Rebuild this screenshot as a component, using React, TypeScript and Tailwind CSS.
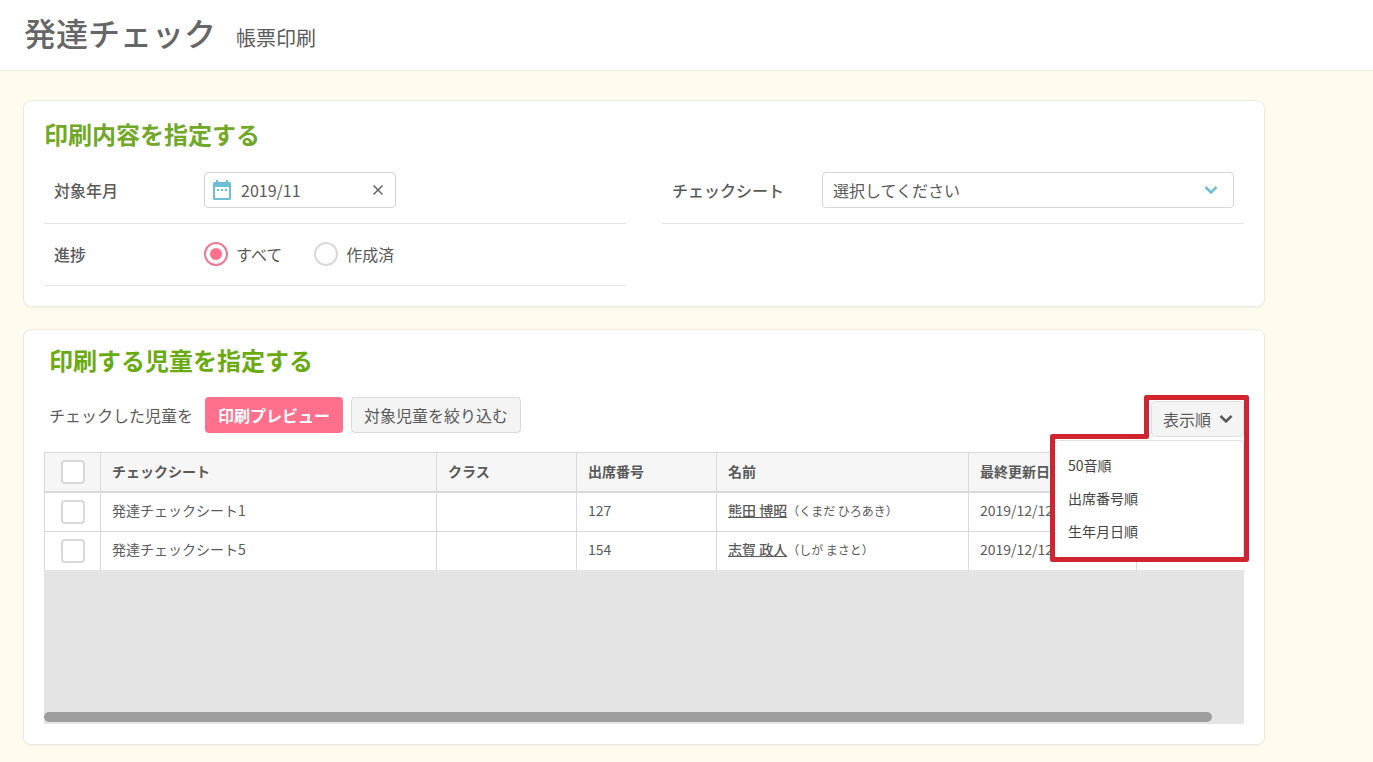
import React, { useState } from 'react';

interface Child {
  id: number;
  sheet: string;
  className: string;
  attendanceNo: string;
  name: string;
  kana: string;
  updatedAt: string;
}

const children: Child[] = [
  { id: 1, sheet: '発達チェックシート1', className: '', attendanceNo: '127', name: '熊田 博昭', kana: '（くまだ ひろあき）', updatedAt: '2019/12/12' },
  { id: 2, sheet: '発達チェックシート5', className: '', attendanceNo: '154', name: '志賀 政人', kana: '（しが まさと）', updatedAt: '2019/12/12' }
];

const sortOptions = ['50音順', '出席番号順', '生年月日順'];

const CalendarIcon: React.FC = () => (
  <svg className="w-[18px] h-5 shrink-0" viewBox="0 0 18 20" fill="#6cbfd6" aria-hidden="true">
    <path fillRule="evenodd" d="M3 0h2v2h8V0h2v2h1.500A1.500 1.500 0 0 1 18 3.500v15a1.500 1.500 0 0 1-1.500 1.500h-15A1.500 1.500 0 0 1 0 18.500v-15A1.500 1.500 0 0 1 1.500 2H3zM2 7v11h14V7z" />
    <path d="M4 9h2v2H4zM8 9h2v2H8zM12 9h2v2h-2z" />
  </svg>
);

const Chevron: React.FC<{ className: string }> = ({ className }) => (
  <svg className={className} viewBox="0 0 14 10" fill="none" stroke="currentColor" strokeWidth={2.5} aria-hidden="true">
    <path d="M1.500 2 7 7.500 12.500 2" />
  </svg>
);

interface CheckBoxProps {
  label: string;
  checked: boolean;
  onChange: () => void;
}

const CheckBox: React.FC<CheckBoxProps> = ({ label, checked, onChange }) => (
  <input
    type="checkbox"
    aria-label={label}
    checked={checked}
    onChange={onChange}
    className="block mx-auto w-6 h-6 appearance-none rounded border-2 border-[#d9d9d9] bg-white checked:bg-[#ff708c]"
  />
);

const App: React.FC = () => {
  const [month, setMonth] = useState('2019/11');
  const [progress, setProgress] = useState('all');
  const [checked, setChecked] = useState<number[]>([]);
  const [menuOpen, setMenuOpen] = useState(true);

  const toggle = (id: number) => {
    setChecked(prev => (prev.includes(id) ? prev.filter(v => v !== id) : [...prev, id]));
  };

  const allChecked = checked.length === children.length;

  const radioClass =
    'w-6 h-6 appearance-none rounded-full border-2 border-[#d9d9d9] bg-white bg-clip-content p-1 checked:border-[#e87a92] checked:bg-[#ff708c]';

  return (
    <div className="min-h-screen bg-[#fffbee] text-base text-[#5a5a5a] font-['Noto_Sans_CJK_JP',sans-serif]">
      <header className="flex items-baseline gap-5 h-[71px] px-6 pt-2 bg-white border-b border-[#ebebe6]">
        <h1 className="text-[32px] leading-12 font-medium text-[#666]">発達チェック</h1>
        <p className="text-xl">帳票印刷</p>
      </header>

      <main className="max-w-[1265px] pl-[23px] pt-[29px] pb-4">
        <section className="px-5 pt-[15px] pb-5 bg-white border border-[#ebebe3] rounded-lg shadow-xs">
          <h2 className="text-2xl leading-9 font-bold text-[#72a827]">印刷内容を指定する</h2>
          <div className="grid grid-cols-2 gap-x-9 mt-[5px]">
            <div className="flex items-center h-[67px] pl-2.5 border-b border-[#e6e6e6]">
              <label htmlFor="month" className="w-[150px] font-medium">対象年月</label>
              <div className="flex items-center w-48 h-9 px-2 bg-white border border-[#d5d5d5] rounded">
                <CalendarIcon />
                <input
                  id="month"
                  type="text"
                  value={month}
                  onChange={e => setMonth(e.target.value)}
                  className="flex-1 min-w-0 ml-2.5 outline-none"
                />
                <button type="button" aria-label="クリア" onClick={() => setMonth('')} className="p-1">
                  <svg className="w-[10px] h-[10px]" viewBox="0 0 10 10" stroke="currentColor" strokeWidth={1.4}>
                    <path d="M.5.5l9 9M9.500.5l-9 9" />
                  </svg>
                </button>
              </div>
            </div>

            <div className="flex items-center h-[67px] pl-2.5 pr-2.5 border-b border-[#e6e6e6]">
              <label htmlFor="sheet" className="w-[150px] font-medium">チェックシート</label>
              <div className="relative flex-1">
                <select
                  id="sheet"
                  className="block w-full h-9 px-2.5 appearance-none bg-white border border-[#d5d5d5] rounded"
                >
                  <option>選択してください</option>
                </select>
                <Chevron className="absolute right-4 top-[13px] w-3.5 h-2.5 text-[#6cbfd6] pointer-events-none" />
              </div>
            </div>

            <div className="flex items-center h-[62px] pl-2.5 pb-0.5 border-b border-[#e6e6e6]">
              <span id="progress" className="w-[150px] font-medium">進捗</span>
              <div role="radiogroup" aria-labelledby="progress" className="flex gap-8">
                <label className="flex items-center gap-2">
                  <input
                    type="radio"
                    name="progress"
                    checked={progress === 'all'}
                    onChange={() => setProgress('all')}
                    className={radioClass}
                  />
                  すべて
                </label>
                <label className="flex items-center gap-2">
                  <input
                    type="radio"
                    name="progress"
                    checked={progress === 'done'}
                    onChange={() => setProgress('done')}
                    className={radioClass}
                  />
                  作成済
                </label>
              </div>
            </div>
          </div>
        </section>

        <section className="mt-[22px] px-5 pt-3 pb-5 bg-white border border-[#ebebe3] rounded-lg shadow-xs">
          <h2 className="pl-[5px] text-2xl leading-9 font-bold text-[#6aab12]">印刷する児童を指定する</h2>

          <div className="flex items-center gap-2 h-9 mt-[19px] pl-[5px]">
            <span className="mr-1">チェックした児童を</span>
            <button type="button" className="h-9 px-[13px] rounded bg-[#ff708c] font-bold text-white">
              印刷プレビュー
            </button>
            <button type="button" className="h-9 px-3 rounded border border-[#d9d9d9] bg-[#f4f4f4]">
              対象児童を絞り込む
            </button>

            <div className="relative ml-auto mt-2">
              <button
                type="button"
                aria-expanded={menuOpen}
                onClick={() => setMenuOpen(!menuOpen)}
                className="flex items-center gap-2 h-9 pl-[11px] pr-2.5 rounded border border-[#e0e0e0] bg-[#f4f4f4]"
              >
                表示順
                <Chevron className="w-3.5 h-2.5" />
              </button>
              {menuOpen && (
                <>
                  <ul className="absolute right-0 top-[39px] w-[190px] pt-2 pb-3 bg-white border border-[#e0e0e0] rounded text-sm text-[#444]">
                    {sortOptions.map(option => (
                      <li key={option}>
                        <button type="button" className="block w-full h-[33px] px-[13px] pb-0.5 text-left">
                          {option}
                        </button>
                      </li>
                    ))}
                  </ul>
                  <svg
                    className="absolute -right-[5px] -top-[6px] w-[199px] h-[167px] pointer-events-none"
                    viewBox="0 0 199 167"
                    fill="none"
                    stroke="#d0252f"
                    strokeWidth={5}
                    strokeLinejoin="round"
                    aria-hidden="true"
                  >
                    <path d="M96.500 2.500h100v162H2.500v-123h94z" />
                  </svg>
                </>
              )}
            </div>
          </div>

          <div className="mt-[19px] h-[272px] flex flex-col overflow-hidden bg-[#e4e4e4]">
            <table className="w-full table-fixed border-separate border-spacing-0 bg-white text-sm text-left [&_th]:border-t [&_th]:border-b-2 [&_th]:border-l [&_td]:border-l [&_th]:border-[#dadada] [&_td]:border-[#dadada] [&_th]:px-[11px] [&_td]:px-[11px] [&_th:not(:first-child)]:pb-0.5 [&_td:not(:first-child)]:pb-1">
              <colgroup>
                <col className="w-14" />
                <col className="w-[336px]" />
                <col className="w-[140px]" />
                <col className="w-[140px]" />
                <col className="w-[252px]" />
                <col className="w-[168px]" />
                <col />
              </colgroup>
              <thead>
                <tr className="h-[41px] bg-[#f6f6f6]">
                  <th>
                    <CheckBox
                      label="すべて選択"
                      checked={allChecked}
                      onChange={() => setChecked(allChecked ? [] : children.map(c => c.id))}
                    />
                  </th>
                  <th>チェックシート</th>
                  <th>クラス</th>
                  <th>出席番号</th>
                  <th>名前</th>
                  <th>最終更新日</th>
                  <th></th>
                </tr>
              </thead>
              <tbody className="[&>tr:not(:last-child)>td]:border-b">
                {children.map(child => (
                  <tr key={child.id} className="h-[39px] last:h-[38px]">
                    <td>
                      <CheckBox label={child.name} checked={checked.includes(child.id)} onChange={() => toggle(child.id)} />
                    </td>
                    <td>{child.sheet}</td>
                    <td>{child.className}</td>
                    <td>{child.attendanceNo}</td>
                    <td className="whitespace-nowrap">
                      <a href="#" className="font-medium underline">{child.name}</a>
                      <span className="text-xs">{child.kana}</span>
                    </td>
                    <td>{child.updatedAt}</td>
                    <td></td>
                  </tr>
                ))}
              </tbody>
            </table>
            <div className="mt-auto mb-0.5 h-2.5 w-[97.333%] rounded-full bg-[#9e9e9e]" />
          </div>
        </section>
      </main>
    </div>
  );
};

export default App;
